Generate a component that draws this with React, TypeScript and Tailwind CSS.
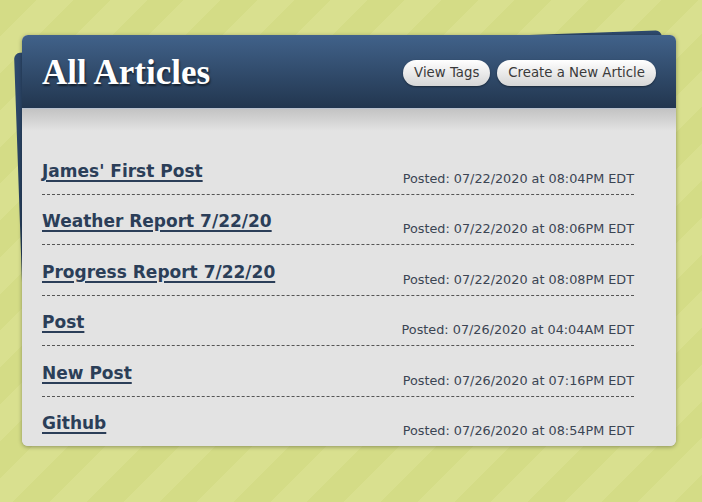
const articles = [
  { title: "James' First Post", posted: "07/22/2020 at 08:04PM EDT" },
  { title: "Weather Report 7/22/20", posted: "07/22/2020 at 08:06PM EDT" },
  { title: "Progress Report 7/22/20", posted: "07/22/2020 at 08:08PM EDT" },
  { title: "Post", posted: "07/26/2020 at 04:04AM EDT" },
  { title: "New Post", posted: "07/26/2020 at 07:16PM EDT" },
  { title: "Github", posted: "07/26/2020 at 08:54PM EDT" },
]

export default function App() {
  return (
    <div className="h-[502px] w-full overflow-hidden bg-[#d4dc86] bg-[repeating-linear-gradient(135deg,#d4dc86_0px,#d4dc86_26px,#d9e08f_26px,#d9e08f_52px)] pl-[22px] pt-[35px] font-['DejaVu_Sans',sans-serif]">
      <div className="relative w-[654px]">
        {/* stacked sheet behind the card */}
        <div className="absolute left-[-8px] top-[18px] h-[370px] w-[648px] origin-top-left -rotate-2 rounded-md bg-[linear-gradient(#2e4a6d,#1e324c)]" />

        <div className="relative overflow-hidden rounded-md bg-[#e3e3e3] shadow-[0_1px_4px_rgba(0,0,0,0.35)]">
          <header className="flex h-[73px] items-center justify-between bg-[linear-gradient(#41628a,#22364f)] px-5">
            <h1 className="pt-[2px] font-['Liberation_Serif',serif] text-[35px] font-bold leading-none text-white [text-shadow:1px_2px_2px_rgba(0,0,0,0.55)]">
              All Articles
            </h1>
            <div className="mt-[3px] flex gap-[7px]">
              <Pill>View Tags</Pill>
              <Pill>Create a New Article</Pill>
            </div>
          </header>

          <div className="border-t border-[#b9c2cf] bg-[linear-gradient(#c3c3c3,#e3e3e3_22px)] pb-0 pl-5 pr-[42px] pt-[35px]">
            <ul>
              {articles.map((a, i) => (
                <li
                  key={a.title}
                  className={
                    "flex items-end justify-between pb-[6px] pt-[14.5px] " +
                    (i < articles.length - 1 ? "border-b border-dashed border-[#555]" : "")
                  }
                >
                  <a
                    href="#"
                    className="mb-[5px] text-[17px] font-bold leading-6 text-[#2b3e58] underline decoration-2 underline-offset-[3px]"
                  >
                    {a.title}
                  </a>
                  <span className="text-[12.8px] leading-[18px] text-[#3b4553]">Posted: {a.posted}</span>
                </li>
              ))}
            </ul>
          </div>
        </div>
      </div>
    </div>
  )
}

function Pill({ children }: { children: React.ReactNode }) {
  return (
    <button className="h-[26px] rounded-full bg-[linear-gradient(#ffffff,#d6d6d6)] px-[11px] text-[13.3px] text-[#3a3a3a] shadow-[0_1px_2px_rgba(0,0,0,0.4)]">
      {children}
    </button>
  )
}
